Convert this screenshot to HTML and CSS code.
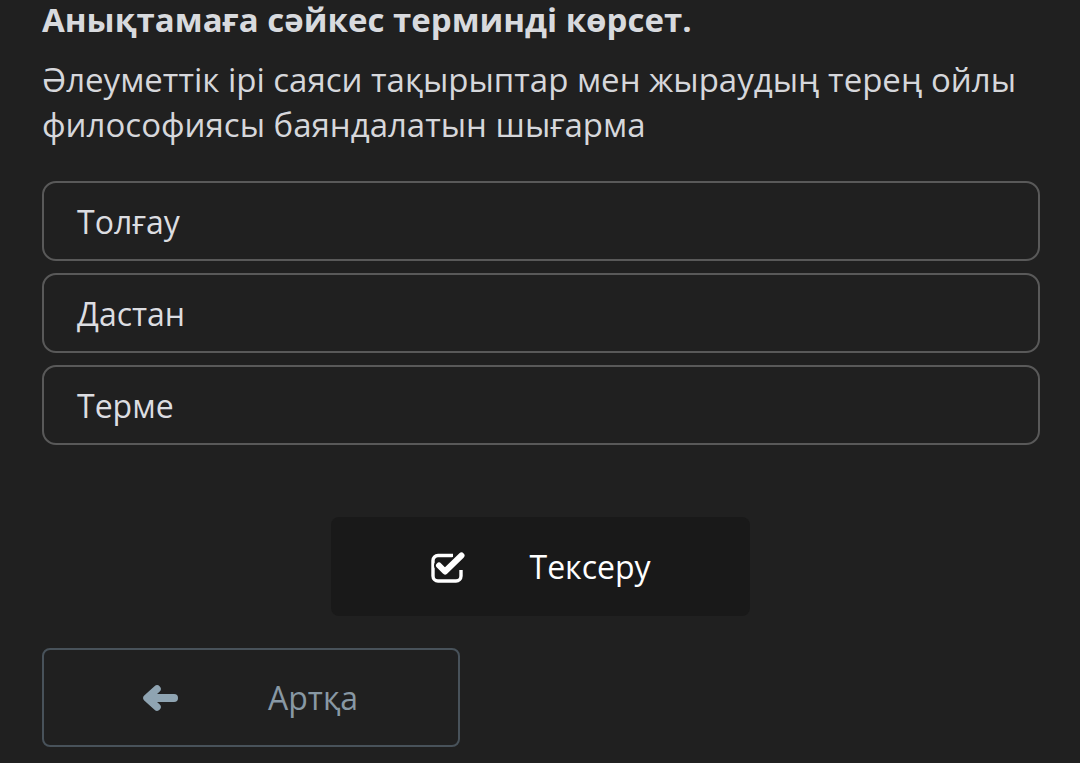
FILE: index.html
```html
<!DOCTYPE html>
<html lang="kk">
<head>
<meta charset="utf-8">
<title>Тест</title>
<link rel="stylesheet" href="styles.css">
</head>
<body>
<main class="quiz">
  <h1 class="quiz-title">Анықтамаға сәйкес терминді көрсет.</h1>
  <p class="quiz-question">Әлеуметтік ірі саяси тақырыптар мен жыраудың терең ойлы философиясы баяндалатын шығарма</p>
  <div class="options">
    <div class="option">Толғау</div>
    <div class="option">Дастан</div>
    <div class="option">Терме</div>
  </div>
  <div class="check-row">
    <button class="btn-check" type="button">
      <svg class="icon-check" width="35" height="31" viewBox="0 0 35 31" aria-hidden="true">
        <path d="M22 3.5 H7 a5 5 0 0 0 -5 5 V24 a5 5 0 0 0 5 5 H25 a5 5 0 0 0 5 -5 V18" fill="none" stroke="#ffffff" stroke-width="3.4"/>
        <polyline points="8,13.5 14,19.5 30.5,3.5" fill="none" stroke="#191919" stroke-width="10" stroke-linecap="round" stroke-linejoin="round"/>
        <polyline points="8,13.5 14,19.5 30.5,3.5" fill="none" stroke="#ffffff" stroke-width="6" stroke-linecap="round" stroke-linejoin="round"/>
      </svg>
      <span>Тексеру</span>
    </button>
  </div>
  <button class="btn-back" type="button">
    <svg class="icon-back" width="36" height="26" viewBox="0 0 36 26" aria-hidden="true">
      <g fill="none" stroke="#8fa4b2" stroke-linecap="round" stroke-linejoin="round">
        <line x1="6" y1="13" x2="31" y2="13" stroke-width="8"/>
        <polyline points="14,4 4,13 14,22" stroke-width="7.5"/>
      </g>
    </svg>
    <span>Артқа</span>
  </button>
</main>
</body>
</html>
```

FILE: styles.css
```css
html, body {
  margin: 0;
  padding: 0;
  background: #202020;
}

body {
  font-family: "Open Sans", "Noto Sans", sans-serif;
  color: #dcdde1;
  width: 1080px;
  height: 763px;
  overflow: hidden;
}

.quiz {
  padding: 0 40px 0 42px;
}

.quiz-title {
  margin: 0;
  font-size: 33px;
  line-height: 40px;
  font-weight: 700;
  color: #d8dade;
}

.quiz-question {
  margin: 17px 0 0;
  font-size: 33px;
  line-height: 45px;
  font-weight: 400;
  color: #d6d7db;
}

.options {
  margin-top: 34px;
  display: flex;
  flex-direction: column;
  gap: 12px;
}

.option {
  height: 80px;
  box-sizing: border-box;
  border: 2px solid #595959;
  border-radius: 14px;
  display: flex;
  align-items: center;
  padding-left: 33px;
  font-size: 32px;
  color: #dcdde1;
}

.check-row {
  margin-top: 72px;
  display: flex;
  justify-content: center;
  padding-right: 2px;
}

.btn-check {
  width: 419px;
  height: 99px;
  border: none;
  border-radius: 8px;
  background: #191919;
  display: flex;
  align-items: center;
  padding: 0 0 0 100px;
  gap: 64px;
  font-family: "Open Sans", "Noto Sans", sans-serif;
  font-size: 32px;
  color: #ffffff;
}

.icon-check {
  flex: none;
  margin-top: 2px;
}

.btn-back {
  margin-top: 32px;
  width: 418px;
  height: 99px;
  box-sizing: border-box;
  border: 2px solid #48525a;
  border-radius: 8px;
  background: transparent;
  display: flex;
  align-items: center;
  padding: 0 0 0 99px;
  gap: 89px;
  font-family: "Open Sans", "Noto Sans", sans-serif;
  font-size: 32px;
  color: #8898a4;
}

.icon-back {
  flex: none;
}
```
